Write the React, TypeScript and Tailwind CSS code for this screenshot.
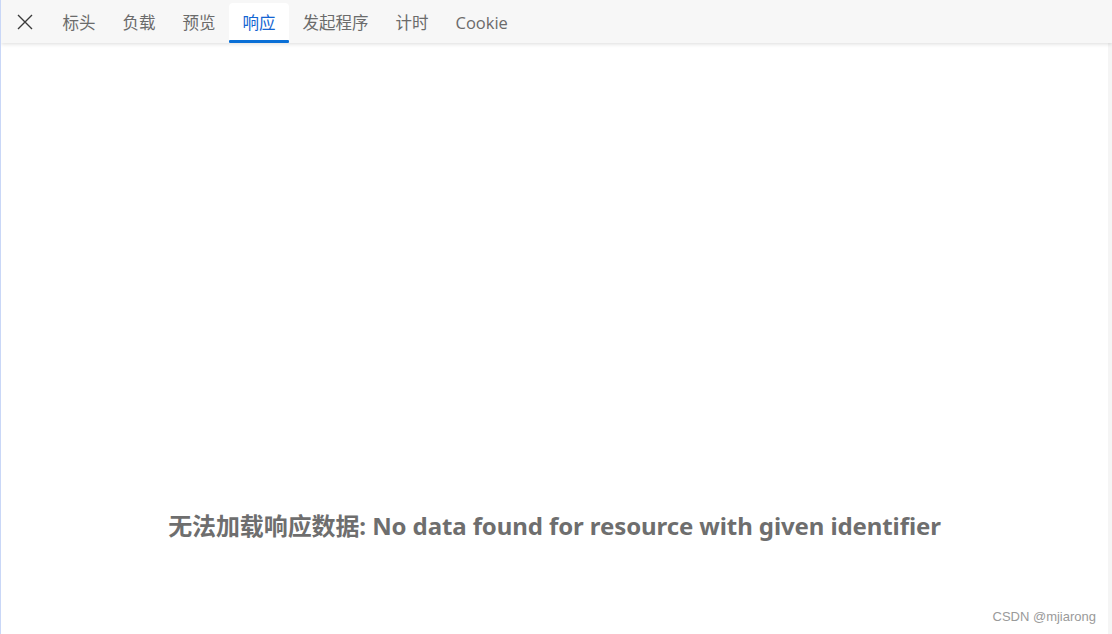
import React from "react";

const tabs = ["标头", "负载", "预览", "响应", "发起程序", "计时", "Cookie"];

export default function App() {
  return (
    <div
      className="flex h-[634px] w-[1112px] flex-col overflow-hidden border-l border-[#c9d7f7] bg-white"
      style={{ fontFamily: '"Open Sans", "Noto Sans CJK SC", sans-serif' }}
    >
      <div className="relative z-10 flex h-[43px] shrink-0 items-end bg-[#f7f7f7] shadow-[0_1px_4px_rgba(0,0,0,0.14)]">
        <div className="flex h-full w-[48px] items-center justify-center">
          <svg width="18" height="18" viewBox="0 0 18 18" fill="none" stroke="#3a3a3a" strokeWidth="1.4">
            <path d="M2 2 L16 16 M16 2 L2 16" />
          </svg>
        </div>
        {tabs.map((t) => {
          const active = t === "响应";
          return (
            <div
              key={t}
              className={
                active
                  ? "relative flex h-[40px] items-center rounded-t-[4px] bg-white px-[13.5px] text-[16.5px] text-[#1464d2]"
                  : "relative flex h-[40px] items-center px-[13.5px] text-[16.5px] text-[#6b6b6b]"
              }
            >
              <span>{t}</span>
              {active && <div className="absolute bottom-0 left-0 right-0 h-[3px] rounded-[1px] bg-[#0a6fd6]" />}
            </div>
          );
        })}
      </div>
      <div className="flex flex-1 flex-row">
        <div className="relative flex flex-1 flex-col items-center justify-end pb-[92px]">
          <div
            className="text-[24px] font-bold leading-[32px] tracking-[-0.1px] text-[#6e6e6e]"
            style={{ fontFamily: '"Noto Sans", "Noto Sans CJK SC", sans-serif' }}
          >
            无法加载响应数据: No data found for resource with given identifier
          </div>
          <div
            className="absolute bottom-[8px] right-[12px] text-[13px] text-[#9a9a9a]"
            style={{ fontFamily: '"Liberation Sans", sans-serif' }}
          >
            CSDN @mjiarong
          </div>
        </div>
        <div className="w-[4px] bg-[#f5f5f5]" />
      </div>
    </div>
  );
}
